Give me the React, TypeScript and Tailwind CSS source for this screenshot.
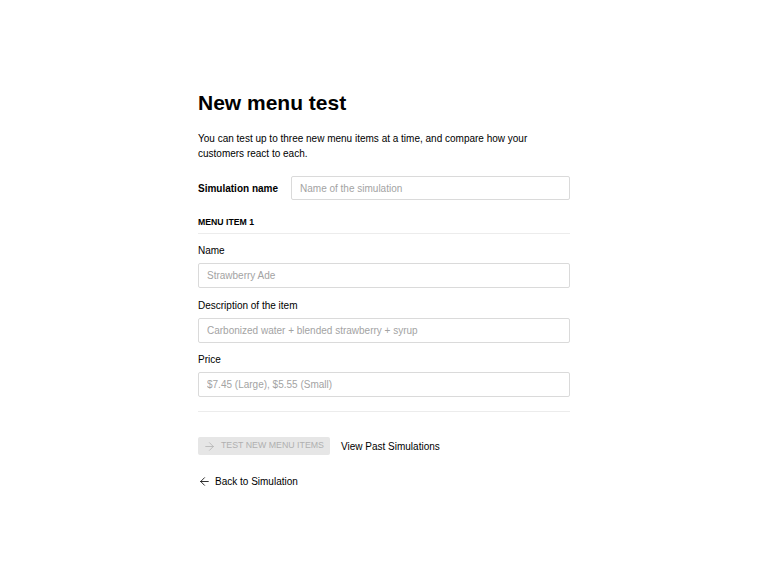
import React from "react";
import { ArrowLeft, ArrowRight } from "lucide-react";

function Field({ label, placeholder }: { label: string; placeholder: string }) {
  return (
    <div className="flex flex-col">
      <label className="text-[10px] leading-[15px] text-black">{label}</label>
      <input
        placeholder={placeholder}
        className="mt-[5px] h-[25px] w-full rounded-[2px] border border-[#dadada] bg-white px-[8px] text-[10px] text-black outline-none placeholder:text-[#a3a3a3]"
      />
    </div>
  );
}

export default function App() {
  return (
    <div
      className="min-h-[573px] w-full bg-white"
      style={{ fontFamily: '"Liberation Sans", Arial, Helvetica, sans-serif' }}
    >
      <div className="flex w-[372px] flex-col pt-[90px] ml-[198px]">
        <h1 className="text-[21px] font-bold leading-[25px] text-black">New menu test</h1>
        <p className="mt-[16px] text-[10px] leading-[15px] text-black">
          You can test up to three new menu items at a time, and compare how your customers react to each.
        </p>

        <div className="mt-[15px] flex items-center gap-[13px]">
          <span className="shrink-0 text-[10px] font-bold text-black">Simulation name</span>
          <input
            placeholder="Name of the simulation"
            className="h-[24px] flex-1 rounded-[2px] border border-[#dadada] bg-white px-[8px] text-[10px] text-black outline-none placeholder:text-[#a3a3a3]"
          />
        </div>

        <div className="mt-[16px] border-b border-[#ececec] pb-[5px] text-[8.7px] font-bold leading-[12px] text-black">
          MENU ITEM 1
        </div>

        <div className="mt-[9px] flex flex-col gap-[9.5px]">
          <Field label="Name" placeholder="Strawberry Ade" />
          <Field label="Description of the item" placeholder="Carbonized water + blended strawberry + syrup" />
          <Field label="Price" placeholder="$7.45 (Large), $5.55 (Small)" />
        </div>

        <div className="mt-[14px] h-px w-full bg-[#ececec]" />

        <div className="mt-[25px] flex items-center gap-[11px]">
          <button
            disabled
            className="flex h-[18px] w-[132px] items-center gap-[5px] rounded-[2px] bg-[#e6e6e6] pl-[5px] text-[8.8px] text-[#b0b0b0]"
          >
            <ArrowRight size={13} strokeWidth={1.4} />
            <span>TEST NEW MENU ITEMS</span>
          </button>
          <span className="text-[10px] text-black">View Past Simulations</span>
        </div>

        <div className="mt-[19px] flex items-center gap-[4px] text-[10px] leading-[15px] text-black">
          <ArrowLeft size={13} strokeWidth={1.5} />
          <span>Back to Simulation</span>
        </div>
      </div>
    </div>
  );
}
